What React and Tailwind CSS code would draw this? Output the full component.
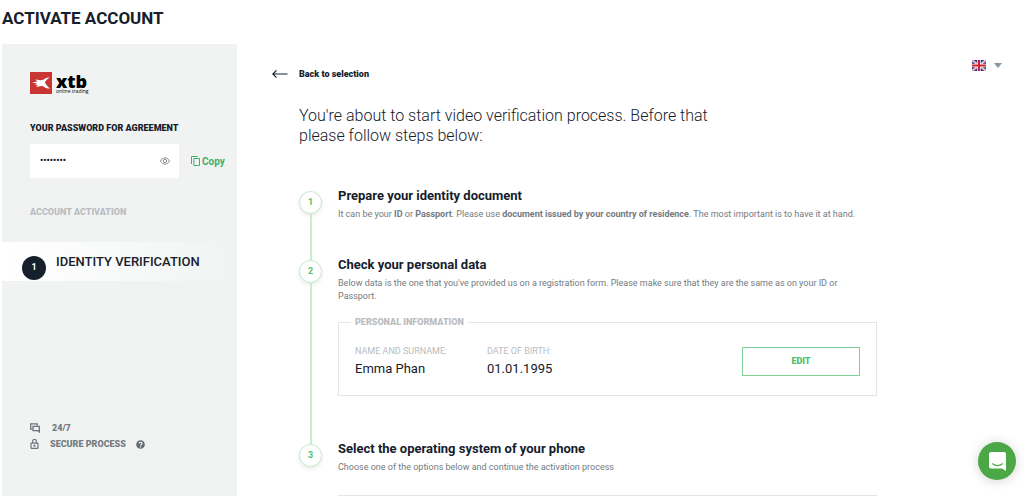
import clsx from "clsx";

function XtbLogo() {
    return (
        <a href="#" aria-label="xtb online trading" className="flex items-center gap-1 text-black">
            <svg viewBox="0 0 22 22" className="h-[22px] w-[22px]" aria-hidden="true">
                <rect width="22" height="22" fill="#c93434" />
                <path
                    d="M2 10.2 7.6 9.6 5.2 7.4 11 8.2C12.6 8.3 13.6 7.6 14.8 6.8 16.2 5.9 17.8 5.6 19.8 5.6 17.4 6.9 15.8 8.7 14.9 10.6 16.2 13 17.8 14.9 20 16.6 17 16.6 14.6 15.6 12.6 14 11.2 13.7 10 14.1 8.8 14.5L6 14.8 7.8 12.8 4.6 12.4 7 11.4Z"
                    fill="#fff"
                />
            </svg>
            <span className="flex flex-col">
                <span className="font-['Open_Sans',sans-serif] text-[18px] font-extrabold leading-[16px]">xtb</span>
                <span className="font-['Open_Sans',sans-serif] text-[5px] leading-[4px]">online trading</span>
            </span>
        </a>
    );
}

function EyeIcon() {
    return (
        <svg viewBox="0 0 10 8" className="h-2 w-[10px]" fill="none" stroke="#6b7075" strokeWidth="0.8" aria-hidden="true">
            <path d="M0.5 4C1.7 1.8 3.2 0.8 5 0.8S8.3 1.8 9.5 4C8.3 6.2 6.8 7.2 5 7.2S1.7 6.2 0.5 4Z" />
            <circle cx="5" cy="4" r="1.7" />
        </svg>
    );
}

function CopyIcon() {
    return (
        <svg viewBox="0 0 9 10" className="h-[10px] w-[9px]" fill="none" stroke="#3fae6a" aria-hidden="true">
            <path d="M2.9 2.5h5.6v7H2.9z" />
            <path d="M0.5 8V0.5H6.5" />
        </svg>
    );
}

function ChatsIcon() {
    return (
        <svg viewBox="0 0 10 10" className="h-[10px] w-[10px]" fill="none" stroke="#6d757c" strokeWidth="1.3" aria-hidden="true">
            <path d="M2.8 6.2H0.7V0.9H7.2V2.8" />
            <path d="M3 3.4H9.3V9L7.8 7.6H3Z" />
        </svg>
    );
}

function LockIcon() {
    return (
        <svg viewBox="0 0 10 10" className="h-[10px] w-[10px]" fill="none" stroke="#6d757c" strokeWidth="1.2" aria-hidden="true">
            <rect x="1" y="4.1" width="7" height="5.2" rx="0.6" />
            <path d="M2.6 4V2.4a1.9 1.9 0 0 1 3.8 0V4" />
            <circle cx="4.5" cy="6.7" r="0.5" fill="#6d757c" />
        </svg>
    );
}

function HelpIcon() {
    return (
        <svg viewBox="0 0 10 10" className="h-[9px] w-[9px]" aria-hidden="true">
            <circle cx="5" cy="5" r="4.8" fill="#656d74" />
            <path d="M3.4 3.9C3.5 1.9 6.8 2 6.7 3.9 6.6 5 5.1 5 5.1 6.2" fill="none" stroke="#fff" strokeWidth="1.2" />
            <circle cx="5.1" cy="7.7" r="0.7" fill="#fff" />
        </svg>
    );
}

function UkFlag() {
    return (
        <svg viewBox="0 0 14 11" className="h-[11px] w-[14px]" aria-hidden="true">
            <rect width="14" height="11" fill="#27348b" />
            <path d="M0 0 14 11M14 0 0 11" stroke="#fff" strokeWidth="1.8" />
            <path d="M0 0 14 11M14 0 0 11" stroke="#d8313b" strokeWidth="0.6" />
            <path d="M7 0V11M0 5.5H14" stroke="#fff" strokeWidth="3.4" />
            <path d="M7 0V11M0 5.5H14" stroke="#d0202e" strokeWidth="2" />
        </svg>
    );
}

function Sidebar() {
    return (
        <aside className="flex w-[235px] shrink-0 flex-col bg-[#f1f3f3] pt-7">
            <div className="px-7">
                <XtbLogo />
                <label htmlFor="password" className="mt-7 block text-[9px] font-black leading-[12px]">
                    YOUR PASSWORD FOR AGREEMENT
                </label>
            </div>
            <div className="mt-[10px] flex items-center gap-3 pl-7">
                <div className="flex h-[34px] w-[149px] items-center bg-white pr-[9px] pl-[10px]">
                    <input
                        id="password"
                        type="text"
                        readOnly
                        value="••••••••"
                        className="w-full min-w-0 bg-transparent text-[9px] font-bold outline-none"
                    />
                    <button type="button" aria-label="Show password">
                        <EyeIcon />
                    </button>
                </div>
                <button type="button" className="flex items-center gap-[2px] text-[10px] font-bold text-[#3fae6a]">
                    <CopyIcon />
                    Copy
                </button>
            </div>

            <h2 className="mt-7 px-7 text-[9px] font-black leading-[12px] text-[#b9bdc0]">ACCOUNT ACTIVATION</h2>
            <a
                href="#"
                className="mt-6 flex h-[39px] gap-[10px] bg-linear-to-r from-white to-[#f1f3f3] pl-5"
            >
                <span className="mt-[14px] flex size-6 items-center justify-center rounded-full bg-[#15202c] text-[9px] font-bold text-white">
                    1
                </span>
                <span className="mt-3 text-[13px] font-medium leading-[16px]">IDENTITY VERIFICATION</span>
            </a>

            <div className="mt-auto flex flex-col gap-1 px-7 pb-[46px] text-[9px] font-black leading-[12px] text-[#737b82]">
                <div className="flex items-center gap-3">
                    <ChatsIcon />
                    24/7
                </div>
                <div className="flex items-center gap-[10px]">
                    <LockIcon />
                    SECURE PROCESS
                    <button type="button" aria-label="About the secure process">
                        <HelpIcon />
                    </button>
                </div>
            </div>
        </aside>
    );
}

function Step({ number, title, last, children, className }) {
    return (
        <li className="flex gap-4">
            <div className="flex w-[23px] shrink-0 flex-col items-center">
                <span className="flex size-[23px] items-center justify-center rounded-full border border-[#c3e9cb] bg-white text-[9px] font-bold text-[#52c06c] shadow-[0_2px_4px_rgba(0,0,0,0.08)]">
                    {number}
                </span>
                {!last && <span className="w-[2px] flex-1 bg-[#c9ebd0]" />}
            </div>
            <div className={clsx("-mt-[3px] min-w-0 flex-1", className)}>
                <h3 className="text-[13px] font-bold leading-[16px]">{title}</h3>
                {children}
            </div>
        </li>
    );
}

function PersonalInformation() {
    return (
        <fieldset className="mt-[13px] flex items-start border border-[#e3e5e6] px-4 pt-[17px] pb-[18px]">
            <legend className="-ml-1 px-1 text-[9px] font-black leading-[12px] text-[#b9bdc0]">PERSONAL INFORMATION</legend>
            <dl className="flex flex-1">
                <div className="w-[132px]">
                    <dt className="text-[9px] leading-[12px] text-[#b9bdc0]">NAME AND SURNAME:</dt>
                    <dd className="mt-1 text-[13px] leading-[16px]">Emma Phan</dd>
                </div>
                <div>
                    <dt className="text-[9px] leading-[12px] text-[#b9bdc0]">DATE OF BIRTH:</dt>
                    <dd className="mt-1 text-[13px] leading-[16px]">01.01.1995</dd>
                </div>
            </dl>
            <button
                type="button"
                className="mt-[2px] h-[29px] w-[118px] border border-[#7fd093] text-[9px] font-black text-[#52c06c]"
            >
                EDIT
            </button>
        </fieldset>
    );
}

export default function App() {
    return (
        <div className="flex h-screen flex-col overflow-hidden bg-white pb-[3px] font-[Roboto,sans-serif] text-[#15202c]">
            <h1 className="h-11 shrink-0 px-[2px] pt-2 text-[17px] font-bold leading-[20px]">ACTIVATE ACCOUNT</h1>

            <div className="flex min-h-0 flex-1 pl-[2px]">
                <Sidebar />

                <main className="flex min-w-0 flex-1 items-start justify-between overflow-hidden pt-4 pr-[22px] pl-[35px]">
                    <div className="w-full max-w-[605px] pt-2">
                        <a href="#" className="flex items-center gap-[11px] text-[9px] font-black leading-[12px]">
                            <svg viewBox="0 0 16 10" className="h-[10px] w-4" fill="none" stroke="#15202c" strokeWidth="1.2" aria-hidden="true">
                                <path d="M15.5 5H1M4.5 1.3 0.8 5 4.5 8.7" />
                            </svg>
                            Back to selection
                        </a>

                        <div className="pl-[27px]">
                            <h2 className="mt-[26px] max-w-[420px] text-[16px] font-light leading-[20px]">
                                You're about to start video verification process. Before that please follow steps below:
                            </h2>

                            <ol className="mt-[45px]">
                                <Step number={1} title="Prepare your identity document" className="pb-[39px]">
                                    <p className="mt-1 text-[9px] leading-[13px] text-[#737b82]">
                                        It can be your <b>ID</b> or <b>Passport</b>. Please use{" "}
                                        <b>document issued by your country of residence</b>. The most important is to have it at hand.
                                    </p>
                                </Step>
                                <Step number={2} title="Check your personal data" className="pb-12">
                                    <p className="mt-1 text-[9px] leading-[13px] text-[#737b82]">
                                        Below data is the one that you've provided us on a registration form. Please make sure that they are the same as on your ID or Passport.
                                    </p>
                                    <PersonalInformation />
                                </Step>
                                <Step number={3} title="Select the operating system of your phone" last>
                                    <p className="mt-1 text-[9px] leading-[13px] text-[#737b82]">
                                        Choose one of the options below and continue the activation process
                                    </p>
                                    <div className="mt-[21px] h-16 border border-[#e3e5e6]" />
                                </Step>
                            </ol>
                        </div>
                    </div>

                    <button type="button" aria-label="Language: English" aria-haspopup="listbox" className="flex items-center gap-2">
                        <UkFlag />
                        <svg viewBox="0 0 8 5" className="h-[5px] w-2" aria-hidden="true">
                            <path d="M0 0H8L4 5Z" fill="#8797a4" />
                        </svg>
                    </button>
                </main>
            </div>

            <button
                type="button"
                aria-label="Open chat"
                className="fixed right-2 bottom-[19px] flex size-[38px] items-center justify-center rounded-full bg-[#4ca847] shadow-[0_1px_12px_rgba(0,0,0,0.18)]"
            >
                <svg viewBox="0 0 17 19" className="h-[19px] w-[17px]" aria-hidden="true">
                    <path d="M2 0H15Q17 0 17 2V19L13 16.5H2Q0 16.5 0 14.5V2Q0 0 2 0Z" fill="#fff" />
                    <path d="M3.5 11.8Q8.5 15.4 13.5 11.8" fill="none" stroke="#4ca847" strokeWidth="1.2" strokeLinecap="round" />
                </svg>
            </button>
        </div>
    );
}
